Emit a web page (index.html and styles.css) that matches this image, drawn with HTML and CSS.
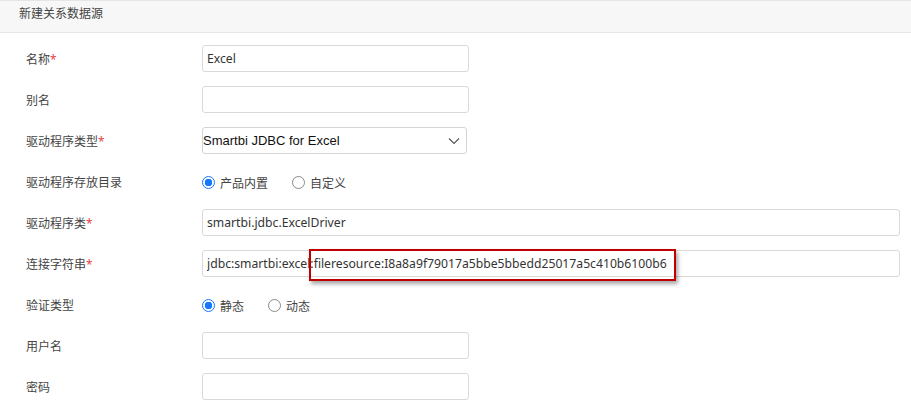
FILE: index.html
```html
<!DOCTYPE html>
<html lang="zh-CN">
<head>
    <meta charset="UTF-8">
    <title>新建关系数据源</title>
    <link rel="stylesheet" href="styles.css">
</head>
<body>
    <div class="panel-title">新建关系数据源</div>
    <div class="form">
        <div class="row">
            <label>名称<span class="req">*</span></label>
            <input class="field short" type="text" value="Excel">
        </div>
        <div class="row">
            <label>别名</label>
            <input class="field short" type="text" value="">
        </div>
        <div class="row">
            <label>驱动程序类型<span class="req">*</span></label>
            <div class="select">
                <span>Smartbi JDBC for Excel</span>
                <svg width="12" height="8" viewBox="0 0 12 8"><path d="M1 1.5 L6 6.5 L11 1.5" fill="none" stroke="#555" stroke-width="1.1"/></svg>
            </div>
        </div>
        <div class="row">
            <label>驱动程序存放目录</label>
            <div class="radios">
                <span class="radio checked"><i></i>产品内置</span>
                <span class="radio"><i></i>自定义</span>
            </div>
        </div>
        <div class="row">
            <label>驱动程序类<span class="req">*</span></label>
            <input class="field wide" type="text" value="smartbi.jdbc.ExcelDriver">
        </div>
        <div class="row">
            <label>连接字符串<span class="req">*</span></label>
            <div class="wrap">
                <input class="field wide" type="text" value="jdbc:smartbi:excel:fileresource:I8a8a9f79017a5bbe5bbedd25017a5c410b6100b6">
                <div class="mark"></div>
            </div>
        </div>
        <div class="row">
            <label>验证类型</label>
            <div class="radios">
                <span class="radio checked"><i></i>静态</span>
                <span class="radio"><i></i>动态</span>
            </div>
        </div>
        <div class="row">
            <label>用户名</label>
            <input class="field short" type="text" value="">
        </div>
        <div class="row">
            <label>密码</label>
            <input class="field short" type="password" value="">
        </div>
    </div>
</body>
</html>
```
FILE: styles.css
```css
body {
    margin: 0;
    background: #fff;
    font-family: "Noto Sans", "Noto Sans CJK SC", sans-serif;
    font-size: 12px;
    color: #333;
}

.panel-title {
    background: #f7f7f7;
    border-top: 1px solid #e6e6e6;
    border-bottom: 1px solid #e6e6e6;
    height: 31px;
    line-height: 25px;
    padding-left: 19px;
    color: #444;
}

.form {
    padding: 12px 12px 0 26px;
}

.row {
    display: grid;
    grid-template-columns: 176px 1fr;
    align-items: center;
    height: 27px;
    margin-bottom: 14px;
}

.row label {
    color: #444;
}

.req {
    color: #e64545;
}

.field {
    box-sizing: border-box;
    height: 27px;
    border: 1px solid #d9d9d9;
    border-radius: 3px;
    padding: 0 5px 0 4px;
    font-family: "Noto Sans", "Noto Sans CJK SC", sans-serif;
    font-size: 12.2px;
    color: #333;
    outline: none;
}

.short {
    width: 267px;
}

.wide {
    width: 698px;
}

.select {
    box-sizing: border-box;
    width: 265px;
    height: 27px;
    border: 1px solid #d4d4d4;
    border-radius: 3px;
    display: flex;
    align-items: center;
    justify-content: space-between;
    padding: 0 6px 0 0;
    font-family: "Liberation Sans", Arial, sans-serif;
    font-size: 13px;
    color: #111;
}

.radios {
    display: flex;
    gap: 24px;
    padding-top: 2px;
}

.radio {
    display: flex;
    align-items: center;
    gap: 5px;
    font-size: 12px;
    color: #444;
}

.radio i {
    box-sizing: border-box;
    width: 13px;
    height: 13px;
    border: 1px solid #8a8a8a;
    border-radius: 50%;
}

.radio.checked i {
    border-color: #1677ff;
    background: radial-gradient(circle, #1677ff 0 3.5px, #fff 4px);
}

.wrap {
    position: relative;
}

.mark {
    position: absolute;
    left: 107px;
    top: -1px;
    width: 363px;
    height: 28px;
    border: 2px solid #c00000;
    box-shadow: 2px 3px 4px rgba(0, 0, 0, 0.35);
}
```
